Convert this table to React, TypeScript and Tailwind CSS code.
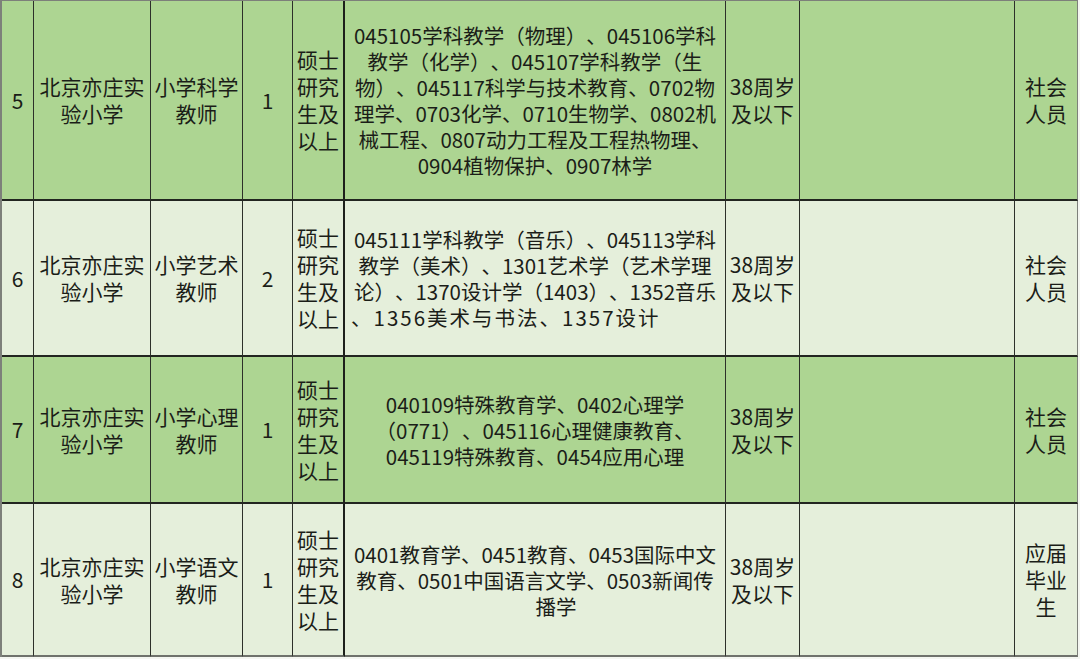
import React from "react";

type Row = {
  n: string;
  school: string[];
  post: string[];
  count: string;
  edu: string[];
  major: { t: string; cls?: string }[];
  age: string[];
  note: string[];
  green: boolean;
  h: string;
};

const rows: Row[] = [
  {
    n: "5",
    school: ["北京亦庄实", "验小学"],
    post: ["小学科学", "教师"],
    count: "1",
    edu: ["硕士", "研究", "生及", "以上"],
    major: [
      { t: "045105学科教学（物理）、045106学科" },
      { t: "教学（化学）、045107学科教学（生" },
      { t: "物）、045117科学与技术教育、0702物" },
      { t: "理学、0703化学、0710生物学、0802机" },
      { t: "械工程、0807动力工程及工程热物理、" },
      { t: "0904植物保护、0907林学" },
    ],
    age: ["38周岁", "及以下"],
    note: ["社会", "人员"],
    green: true,
    h: "h-[200px]",
  },
  {
    n: "6",
    school: ["北京亦庄实", "验小学"],
    post: ["小学艺术", "教师"],
    count: "2",
    edu: ["硕士", "研究", "生及", "以上"],
    major: [
      { t: "045111学科教学（音乐）、045113学科" },
      { t: "教学（美术）、1301艺术学（艺术学理" },
      { t: "论）、1370设计学（1403）、1352音乐" },
      { t: "、1356美术与书法、1357设计", cls: "self-stretch text-left pl-[6px] tracking-[2px]" },
    ],
    age: ["38周岁", "及以下"],
    note: ["社会", "人员"],
    green: false,
    h: "h-[156px]",
  },
  {
    n: "7",
    school: ["北京亦庄实", "验小学"],
    post: ["小学心理", "教师"],
    count: "1",
    edu: ["硕士", "研究", "生及", "以上"],
    major: [
      { t: "040109特殊教育学、0402心理学" },
      { t: "（0771）、045116心理健康教育、" },
      { t: "045119特殊教育、0454应用心理" },
    ],
    age: ["38周岁", "及以下"],
    note: ["社会", "人员"],
    green: true,
    h: "h-[147px]",
  },
  {
    n: "8",
    school: ["北京亦庄实", "验小学"],
    post: ["小学语文", "教师"],
    count: "1",
    edu: ["硕士", "研究", "生及", "以上"],
    major: [
      { t: "0401教育学、0451教育、0453国际中文" },
      { t: "教育、0501中国语言文学、0503新闻传" },
      { t: "播学", cls: "pl-[42px]" },
    ],
    age: ["38周岁", "及以下"],
    note: ["应届", "毕业", "生"],
    green: false,
    h: "h-[153px]",
  },
];

function Lines({ lines }: { lines: string[] }) {
  return (
    <div className="flex flex-col items-center">
      {lines.map((l, i) => (
        <span key={i} className="whitespace-nowrap">
          {l}
        </span>
      ))}
    </div>
  );
}

export default function App() {
  return (
    <div
      className="w-[1080px] h-[659px] bg-[#f4f6f1] text-[#1b1d18] text-[21px] leading-[27px] [text-spacing-trim:space-all]"
      style={{ fontFamily: '"Noto Sans CJK SC", "Noto Sans", sans-serif' }}
    >
      <div className="w-[1078px] border-l-2 border-t border-[#7d807a]">
        {rows.map((r, idx) => {
          const bg = r.green ? "bg-[#add592]" : "bg-[#e5efdb]";
          const last = idx === rows.length - 1;
          const rb = last ? "border-b-2 border-b-[#6f726c]" : "border-b-2 border-b-[#222520]";
          const cell = `flex items-center justify-center text-center ${rb}`;
          return (
            <div
              key={r.n}
              className={`grid grid-cols-[32px_117px_92px_50px_52px_381px_74px_215px_63px] ${r.h} ${bg}`}
            >
              <div className={`${cell} border-r border-r-[#2d302a]`}>{r.n}</div>
              <div className={`${cell} border-r border-r-[#2d302a]`}>
                <Lines lines={r.school} />
              </div>
              <div className={`${cell} border-r border-r-[#2d302a]`}>
                <Lines lines={r.post} />
              </div>
              <div className={`${cell} border-r border-r-[#2d302a]`}>{r.count}</div>
              <div className={`${cell} border-r-2 border-r-[#1d201b]`}>
                <Lines lines={r.edu} />
              </div>
              <div className={`${cell} border-r border-r-[#2d302a] text-[20.5px] leading-[26px]`}>
                <div className="flex flex-col items-center w-full">
                  {r.major.map((m, i) => (
                    <span key={i} className={`whitespace-nowrap ${m.cls ?? ""}`}>
                      {m.t}
                    </span>
                  ))}
                </div>
              </div>
              <div className={`${cell} border-r border-r-[#2d302a]`}>
                <Lines lines={r.age} />
              </div>
              <div className={`${cell} border-r border-r-[#2d302a]`}></div>
              <div className={`${cell} border-r border-r-[#7d807a]`}>
                <Lines lines={r.note} />
              </div>
            </div>
          );
        })}
      </div>
    </div>
  );
}
